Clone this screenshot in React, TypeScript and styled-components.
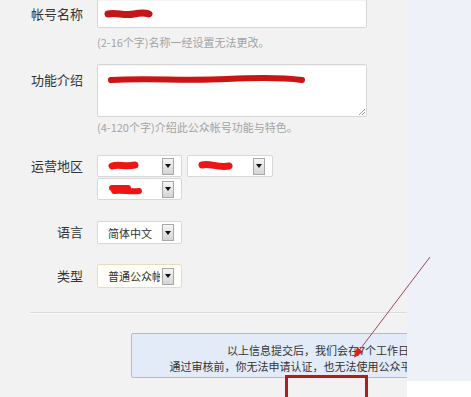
import React from 'react'
import styled, { createGlobalStyle } from 'styled-components'

const GlobalStyle = createGlobalStyle`
  html, body {
    margin: 0;
    padding: 0;
    background: #ffffff;
  }
  body {
    font-family: "Noto Sans CJK SC", "Noto Sans", sans-serif;
    color: #333333;
  }
`

const Page = styled.div`
  position: relative;
  width: 471px;
  height: 397px;
  overflow: hidden;
  display: grid;
  grid-template-columns: 407px 64px;
`

const Main = styled.div`
  background: #f2f2f2;
  overflow: hidden;
  display: flex;
  flex-direction: column;
`

const Side = styled.div`
  height: 381px;
  background: #eef1f7;
`

const Form = styled.div`
  display: flex;
  flex-direction: column;
  margin-top: -1px;
`

const Row = styled.div<{ $top?: number }>`
  display: grid;
  grid-template-columns: 83px 1fr;
  column-gap: 14px;
  align-items: start;
  margin-top: ${({ $top }) => $top ?? 0}px;
`

const Label = styled.div<{ $pad: number }>`
  text-align: right;
  font-size: 13px;
  line-height: 20px;
  padding-top: ${({ $pad }) => $pad}px;
  color: #333333;
  white-space: nowrap;
`

const Field = styled.div`
  display: flex;
  flex-direction: column;
`

const TextBox = styled.div<{ $height: number }>`
  position: relative;
  box-sizing: border-box;
  width: 270px;
  height: ${({ $height }) => $height}px;
  background: #ffffff;
  border: 1px solid #d6d6d6;
  border-radius: 2px;
  box-shadow: inset 0 1px 1px rgba(0, 0, 0, 0.05);
  padding: ${({ $height }) => ($height > 40 ? '8px 0 0 9px' : '7px 0 0 6px')};
`

const Grip = styled.svg`
  position: absolute;
  right: 1px;
  bottom: 1px;
`

const Hint = styled.div<{ $top: number }>`
  margin-top: ${({ $top }) => $top}px;
  font-size: 11px;
  line-height: 16px;
  color: #a3a3a3;
  white-space: nowrap;
`

const SelectGrid = styled.div`
  display: grid;
  grid-template-columns: 85px 86px;
  column-gap: 5px;
  row-gap: 1px;
`

const Select = styled.div<{ $height?: number; $active?: boolean }>`
  box-sizing: border-box;
  height: ${({ $height }) => $height ?? 22}px;
  width: 100%;
  max-width: 86px;
  display: flex;
  align-items: center;
  justify-content: space-between;
  padding: 0 7px 0 10px;
  background: ${({ $active }) => ($active ? '#fffdf7' : '#ffffff')};
  border: 1px solid ${({ $active }) => ($active ? '#e7dcbf' : '#d8d8d8')};
  border-radius: 2px;
  font-size: 11px;
  color: #333333;
  overflow: hidden;
`

const SelectText = styled.span`
  white-space: nowrap;
  overflow: hidden;
  flex: 1;
  min-width: 0;
`

const DropButton = styled.span`
  flex: none;
  box-sizing: border-box;
  width: 12px;
  height: 17px;
  margin-left: 2px;
  border: 1px solid #a8a8a8;
  background: linear-gradient(#f6f6f6, #d4d4d4);
  display: flex;
  align-items: center;
  justify-content: center;
  &::after {
    content: '';
    border-left: 3px solid transparent;
    border-right: 3px solid transparent;
    border-top: 4px solid #111111;
  }
`

const Divider = styled.div`
  margin: 24px 0 0 30px;
  height: 1px;
  background: #dcdcdc;
  box-shadow: 0 1px 0 #fafafa;
`

const Notice = styled.div`
  box-sizing: border-box;
  flex: none;
  width: 440px;
  margin: 20px 0 0 131px;
  padding: 8px 0 3px;
  background: #e2ebf7;
  border: 1px solid #b3bdca;
  border-radius: 2px;
  font-size: 11px;
  line-height: 16px;
  color: #333333;
  text-align: center;
  white-space: nowrap;
`

const Overlay = styled.svg`
  position: absolute;
  left: 0;
  top: 0;
  pointer-events: none;
`

const Scribble = ({ w, d, color = '#d21212', stroke = 7 }: { w: number; d: string; color?: string; stroke?: number }) => (
  <svg width={w} height={14} style={{ display: 'block' }}>
    <path d={d} stroke={color} strokeWidth={stroke} strokeLinecap="round" strokeLinejoin="round" fill="none" />
  </svg>
)

function App() {
  return (
    <>
      <GlobalStyle />
      <Page>
        <Main>
          <Form>
            <Row>
              <Label $pad={5}>帐号名称</Label>
              <Field>
                <TextBox $height={29}>
                  <Scribble w={50} d="M4 7 C 12 5, 20 9, 30 7 S 42 6, 45 7" color="#c41616" />
                </TextBox>
                <Hint $top={6}>(2-16个字)名称一经设置无法更改。</Hint>
              </Field>
            </Row>

            <Row $top={14}>
              <Label $pad={6}>功能介绍</Label>
              <Field>
                <TextBox $height={53}>
                  <svg width={200} height={14} style={{ display: 'block' }}>
                    <path d="M1 6 L12 6 M30 5 L60 5 M150 6 L190 6" stroke="#bbbbbb" strokeWidth={2} fill="none" />
                    <path d="M4 7 C 40 5, 80 8, 120 6 S 180 5, 195 7" stroke="#cc1414" strokeWidth={6} strokeLinecap="round" fill="none" />
                  </svg>
                  <Grip width={7} height={7}>
                    <path d="M1 7 L7 1 M4 7 L7 4" stroke="#9a9a9a" strokeWidth={1} />
                  </Grip>
                </TextBox>
                <Hint $top={2}>(4-120个字)介绍此公众帐号功能与特色。</Hint>
              </Field>
            </Row>

            <Row $top={20}>
              <Label $pad={1}>运营地区</Label>
              <SelectGrid>
                <Select>
                  <Scribble w={32} d="M4 7 C 10 5, 18 8, 27 6" color="#ee1515" />
                  <DropButton />
                </Select>
                <Select>
                  <Scribble w={36} d="M4 6 C 12 4, 20 9, 31 7" color="#ee1515" />
                  <DropButton />
                </Select>
                <Select>
                  <Scribble w={36} d="M4 6 L 20 6 M 6 9 C 14 8, 22 10, 31 9" color="#ee1515" stroke={6} />
                  <DropButton />
                </Select>
              </SelectGrid>
            </Row>

            <Row $top={21}>
              <Label $pad={1}>语言</Label>
              <SelectGrid>
                <Select $height={23}>
                  <SelectText>简体中文</SelectText>
                  <DropButton />
                </Select>
              </SelectGrid>
            </Row>

            <Row $top={20}>
              <Label $pad={2}>类型</Label>
              <SelectGrid>
                <Select $height={24} $active>
                  <SelectText>普通公众帐号</SelectText>
                  <DropButton />
                </Select>
              </SelectGrid>
            </Row>
          </Form>

          <Divider />

          <Notice>
            <div>以上信息提交后，我们会在7个工作日内进行审核。</div>
            <div>通过审核前，你无法申请认证，也无法使用公众平台群发功能和高级功能。</div>
          </Notice>
        </Main>
        <Side />

        <Overlay width={471} height={397}>
          <line x1={430} y1={257} x2={358} y2={352} stroke="#9a4a5a" strokeWidth={1} />
          <polygon points="354,358 363,352 357,347" fill="#d81e1e" />
          <rect x={286.5} y={376.5} width={80} height={30} fill="none" stroke="#b21c1c" strokeWidth={3} />
        </Overlay>
      </Page>
    </>
  )
}

export default App
